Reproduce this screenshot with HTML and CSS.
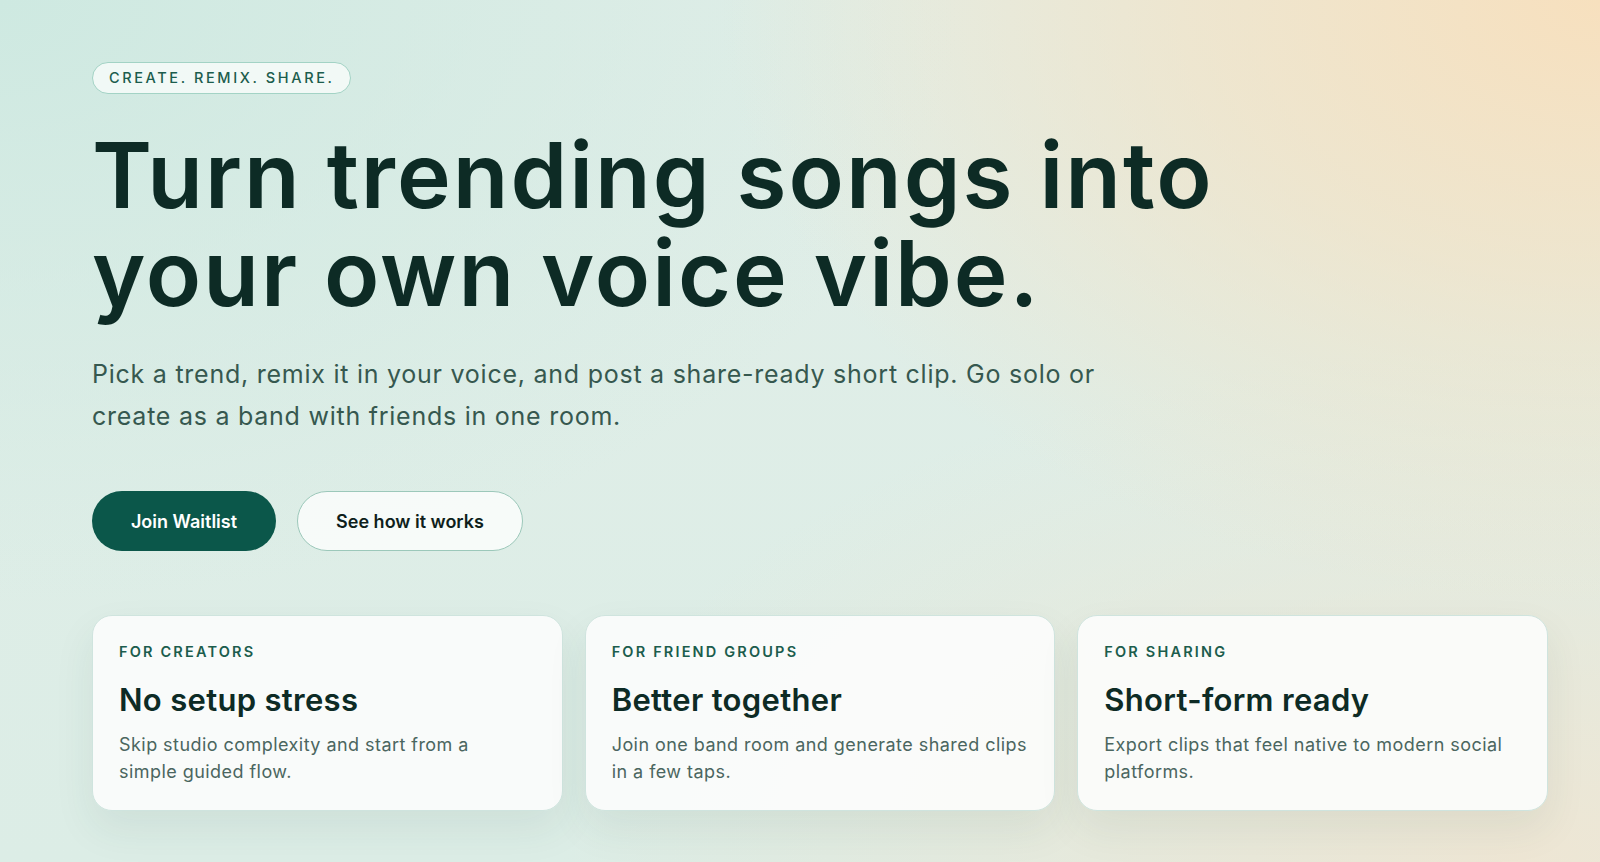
FILE: index.html
```html
<!DOCTYPE html>
<html lang="en">
<head>
<meta charset="utf-8">
<title>Create. Remix. Share.</title>
<link rel="stylesheet" href="styles.css">
</head>
<body>
<main class="hero">
  <span class="eyebrow">Create. Remix. Share.</span>
  <h1 class="title">Turn trending songs into<br>your own voice vibe.</h1>
  <p class="lead">Pick a trend, remix it in your voice, and post a share-ready short clip. Go solo or create as a band with friends in one room.</p>
  <div class="actions">
    <a class="btn btn-primary" href="#">Join Waitlist</a>
    <a class="btn btn-secondary" href="#">See how it works</a>
  </div>
  <section class="cards">
    <article class="card">
      <div class="card-label">For creators</div>
      <h2 class="card-title">No setup stress</h2>
      <p class="card-text">Skip studio complexity and start from a<br>simple guided flow.</p>
    </article>
    <article class="card">
      <div class="card-label">For friend groups</div>
      <h2 class="card-title">Better together</h2>
      <p class="card-text">Join one band room and generate shared clips in a few taps.</p>
    </article>
    <article class="card">
      <div class="card-label">For sharing</div>
      <h2 class="card-title">Short-form ready</h2>
      <p class="card-text">Export clips that feel native to modern social platforms.</p>
    </article>
  </section>
</main>
</body>
</html>
```

FILE: styles.css
```css
* { box-sizing: border-box; }

html, body {
  margin: 0;
  height: 100%;
}

body {
  font-family: Inter, "Noto Sans", sans-serif;
  color: #0d2b25;
  background:
    radial-gradient(ellipse 55% 70% at 100% 0%, rgba(247, 224, 190, 1) 0%, rgba(247, 224, 190, 0.6) 45%, rgba(247, 224, 190, 0) 100%),
    radial-gradient(ellipse 60% 60% at 95% 100%, rgba(238, 230, 212, 1) 0%, rgba(238, 230, 212, 0) 100%),
    radial-gradient(ellipse 60% 70% at 0% 0%, rgba(206, 233, 225, 1) 0%, rgba(206, 233, 225, 0) 100%),
    linear-gradient(180deg, #e1eee8 0%, #dcede6 100%);
  overflow: hidden;
}

.hero {
  padding: 62px 52px 0 92px;
}

.eyebrow {
  display: inline-block;
  height: 32px;
  line-height: 30px;
  padding: 0 15px 0 16px;
  border: 1px solid #a3d3c5;
  border-radius: 999px;
  background: rgba(247, 251, 249, 0.85);
  color: #1c5d4d;
  font-size: 14.5px;
  font-weight: 500;
  letter-spacing: 0.18em;
  text-transform: uppercase;
}

.title {
  margin: 32px 0 0;
  font-size: 91px;
  line-height: 98px;
  font-weight: 600;
  letter-spacing: 0.022em;
  color: #0d2b25;
}

.lead {
  margin: 31px 0 0;
  max-width: 1040px;
  font-size: 25px;
  line-height: 42px;
  letter-spacing: 0.03em;
  color: #36584f;
}

.actions {
  display: flex;
  gap: 21px;
  margin-top: 54px;
}

.btn {
  display: inline-flex;
  align-items: center;
  justify-content: center;
  height: 60px;
  border-radius: 999px;
  font-size: 18px;
  font-weight: 600;
  text-decoration: none;
}

.btn-primary {
  width: 184px;
  background: #0b574a;
  color: #ffffff;
}

.btn-secondary {
  width: 226px;
  background: rgba(250, 252, 251, 0.9);
  border: 1px solid #9cc8ba;
  color: #0f1f1c;
}

.cards {
  display: grid;
  grid-template-columns: repeat(3, 1fr);
  gap: 22px;
  margin-top: 64px;
}

.card {
  padding: 27px 26px 25px;
  border: 1px solid #cfe4de;
  border-radius: 20px;
  background: rgba(251, 252, 251, 0.94);
  box-shadow: 0 18px 40px rgba(40, 80, 68, 0.08);
}

.card-label {
  font-size: 14.5px;
  line-height: 18px;
  font-weight: 600;
  letter-spacing: 0.15em;
  text-transform: uppercase;
  color: #1c5d4d;
}

.card-title {
  margin: 20px 0 0;
  font-size: 31px;
  line-height: 37px;
  font-weight: 600;
  letter-spacing: 0.01em;
  color: #0d2b25;
}

.card-text {
  margin: 14px 0 0;
  font-size: 18px;
  line-height: 26.5px;
  letter-spacing: 0.025em;
  color: #4b665f;
}
```
